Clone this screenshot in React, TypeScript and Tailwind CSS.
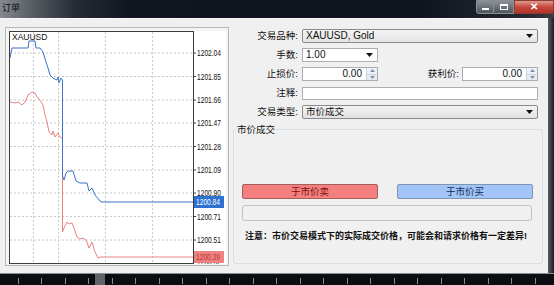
import React from "react";

const F = "font-['Liberation_Sans','Noto_Sans_CJK_SC',sans-serif]";

function Arrow() {
  return (
    <svg width="7" height="4" viewBox="0 0 7 4" className="shrink-0">
      <path d="M0 0h7L3.5 4z" fill="#111" />
    </svg>
  );
}

function Spinner() {
  return (
    <div className="flex flex-col w-[11px] h-full border-l border-[#c9d3de] shrink-0">
      <div className="flex-1 flex items-center justify-center bg-[#eef2f7] border-b border-[#c9d3de]">
        <svg width="5" height="3" viewBox="0 0 5 3"><path d="M0 3h5L2.5 0z" fill="#7f8fa4" /></svg>
      </div>
      <div className="flex-1 flex items-center justify-center bg-[#e6ecf3]">
        <svg width="5" height="3" viewBox="0 0 5 3"><path d="M0 0h5L2.5 3z" fill="#7f8fa4" /></svg>
      </div>
    </div>
  );
}

function AxisText({ x, y, fill, children }: { x: number; y: number; fill: string; children: string }) {
  return (
    <text
      x={x}
      y={y}
      fontSize="8.5"
      fill={fill}
      textLength="24"
      lengthAdjust="spacingAndGlyphs"
      fontFamily="Liberation Sans, sans-serif"
    >
      {children}
    </text>
  );
}

function Chart() {
  const gridY = [53, 76.5, 100, 123, 146.5, 170, 193, 216.5, 240];
  const labels = ["1202.04", "1201.85", "1201.66", "1201.47", "1201.28", "1201.09", "1200.90", "1200.71", "1200.51"];
  const gridX = [33, 58, 105, 152];
  const blue =
    "10,58 12,48 28,48 29,41 35,41 36,48 40,48 43,52 46,62 48,68 50,75 53,78 57,80 58,77 59,83 61,78 62.5,80 62.5,176 64,180 66,173 68,171 73,171 76,181 80,183 87,183 89,191 92,188 95,195 100,201 102,202 193,202";
  const red =
    "10,102 15,103 18,102 22,105 25,102 28,95 32,92 35,93 37,97 40,100 43,105 45,115 47,122 49,132 52,135 53,131 55,137 58,133 60,137 62.5,138 62.5,232 64,228 67,222 69,224 72,223 74,228 77,237 80,239 83,238 86,240 89,248 92,242 95,252 98,258 100,257 193,257";
  return (
    <svg width="217" height="233" viewBox="9 31 217 233" className="block">
      <rect x="9" y="31" width="217" height="233" fill="#ffffff" />
      {gridY.map((y) => (
        <line key={y} x1="10" x2="193" y1={y} y2={y} stroke="#c8c8c8" strokeDasharray="2 2" strokeWidth="1" />
      ))}
      {gridX.map((x) => (
        <line key={x} x1={x + 0.5} x2={x + 0.5} y1="32" y2="263" stroke="#c8c8c8" strokeDasharray="2 2" strokeWidth="1" />
      ))}
      <rect x="9.5" y="31.5" width="184" height="232" fill="none" stroke="#3c3c3c" strokeWidth="1" />
      {gridY.map((y, i) => (
        <g key={"l" + y}>
          <line x1="193" x2="196" y1={y} y2={y} stroke="#3c3c3c" />
          <AxisText x={197} y={y + 3} fill="#111">
            {labels[i]}
          </AxisText>
        </g>
      ))}
      <AxisText x={197} y={265} fill="#111">1200.32</AxisText>
      <polyline points={red} fill="none" stroke="#e98484" strokeWidth="1" />
      <polyline points={blue} fill="none" stroke="#3b73c6" strokeWidth="1" />
      <text x="12" y="40" fontSize="8.5" fill="#111" fontFamily="Liberation Sans, sans-serif">XAUUSD</text>
      <rect x="194" y="196" width="30" height="12" fill="#2d72d2" />
      <AxisText x={196} y={205} fill="#ffffff">1200.84</AxisText>
      <rect x="194" y="251" width="30" height="12" fill="#f08181" />
      <AxisText x={196} y={260} fill="#b53a3a">1200.39</AxisText>
    </svg>
  );
}

function Label({ children, w }: { children: React.ReactNode; w: string }) {
  return <div className={`${w} text-right text-[9.5px] leading-[14px] text-[#111] shrink-0`}>{children}</div>;
}

export default function App() {
  const ticks = [18, 41, 65, 88, 112, 135, 159, 182, 206, 229, 253, 276, 300, 323, 347, 370, 394, 417, 441, 464, 488, 511, 535];
  return (
    <div className={`${F} w-[554px] h-[285px] bg-[#0c1019] flex flex-col overflow-hidden`}>
      {/* title bar */}
      <div className="h-[18px] flex items-start justify-between bg-[linear-gradient(90deg,#85888e_0px,#5b5f66_30px,#262b34_75px,#10151f_130px,#0e131d_420px,#262b33_530px,#3a3e44_554px)]">
        <div className="text-[9px] leading-[16px] pl-[2px] text-[#111]">订单</div>
        <div className="flex h-[14px]">
          <div className="w-[18px] h-[14px] border border-[#8b9096] rounded-bl-[3px] bg-[linear-gradient(180deg,#8b9097,#4f555d)] flex items-end justify-center pb-[3px]">
            <div className="w-[7px] h-[2px] bg-white" />
          </div>
          <div className="w-[20px] h-[14px] border-y border-r border-[#8b9096] bg-[linear-gradient(180deg,#8b9097,#4f555d)] flex items-center justify-center">
            <div className="w-[8px] h-[6px] border border-white border-t-2" />
          </div>
          <div className="w-[40px] h-[14px] border border-[#8e3a33] rounded-br-[3px] bg-[linear-gradient(180deg,#e09a90,#c7473c_50%,#b03329)] flex items-center justify-center">
            <span className="text-white text-[10px] font-bold leading-none">✕</span>
          </div>
        </div>
      </div>

      {/* middle */}
      <div className="flex h-[255px]">
        <div className="w-[548px] h-full bg-[#f0f0f0] border-t border-[#f8f8f8] flex pl-[5px] pt-[8px]">
          {/* chart frame */}
          <div className="w-[224px] h-[239px] border border-[#b7b7b7] bg-[#f4f4f4] pl-[3px] pt-[3px] shrink-0">
            <Chart />
          </div>

          {/* right form */}
          <div className="w-[310px] ml-[4px] flex flex-col">
            <div className="flex flex-col gap-[5px] mt-[2px]">
              <div className="flex items-center h-[14px]">
                <Label w="w-[65px]">交易品种:</Label>
                <div className="ml-[4px] w-[236px] h-[14px] border border-[#8a8a8a] rounded-[2px] bg-[linear-gradient(180deg,#f4f4f4,#e4e4e4)] flex items-center justify-between pl-[3px] pr-[4px]">
                  <span className="text-[10px] leading-none text-[#111]">XAUUSD, Gold</span>
                  <Arrow />
                </div>
              </div>
              <div className="flex items-center h-[14px]">
                <Label w="w-[65px]">手数:</Label>
                <div className="ml-[4px] w-[76px] h-[14px] border border-[#abadb3] bg-white flex items-center justify-between pl-[3px] pr-[4px]">
                  <span className="text-[10px] leading-none text-[#111]">1.00</span>
                  <Arrow />
                </div>
              </div>
              <div className="flex items-center h-[14px]">
                <Label w="w-[65px]">止损价:</Label>
                <div className="ml-[4px] w-[76px] h-[14px] border border-[#abadb3] bg-white flex items-center">
                  <span className="flex-1 text-right pr-[4px] text-[10px] leading-none text-[#111]">0.00</span>
                  <Spinner />
                </div>
                <Label w="w-[81px]">获利价:</Label>
                <div className="ml-[3px] w-[76px] h-[14px] border border-[#abadb3] bg-white flex items-center">
                  <span className="flex-1 text-right pr-[4px] text-[10px] leading-none text-[#111]">0.00</span>
                  <Spinner />
                </div>
              </div>
              <div className="flex items-center h-[14px]">
                <Label w="w-[65px]">注释:</Label>
                <div className="ml-[4px] w-[236px] h-[13px] border border-[#abadb3] bg-white" />
              </div>
              <div className="flex items-center h-[14px]">
                <Label w="w-[65px]">交易类型:</Label>
                <div className="ml-[4px] w-[236px] h-[14px] border border-[#8a8a8a] rounded-[2px] bg-[linear-gradient(180deg,#f2f2f2,#e2e2e2)] flex items-center justify-between pl-[3px] pr-[4px]">
                  <span className="text-[9.5px] leading-none text-[#111]">市价成交</span>
                  <Arrow />
                </div>
              </div>
            </div>

            <fieldset className="mt-[4px] h-[141px] border border-[#d5dfe5] rounded-[3px] px-[8px]">
              <legend className="text-[9.5px] leading-[13px] text-[#111] ml-[-6px] px-[1px]">市价成交</legend>
              <div className="flex gap-[19px] mt-[48px]">
                <button className="w-[136px] h-[15px] border border-[#a55e5e] rounded-[2px] bg-[#f47f7f] text-[9.5px] leading-[13px] text-[#7a1212]">
                  于市价卖
                </button>
                <button className="w-[136px] h-[15px] border border-[#7f93b3] rounded-[2px] bg-[#a2c4f7] text-[9.5px] leading-[13px] text-[#152a5a]">
                  于市价买
                </button>
              </div>
              <div className="mt-[6px] w-[290px] h-[16px] border border-[#c2c2c2] rounded-[3px] bg-[#f0f0f0]" />
              <div className="mt-[9px] pl-[3px] text-[9px] leading-[13px] font-bold text-[#111] whitespace-nowrap">
                注意：市价交易模式下的实际成交价格，可能会和请求价格有一定差异!
              </div>
            </fieldset>
          </div>
        </div>
        <div className="w-[6px] h-full bg-[linear-gradient(90deg,#5a5e63,#1a1d22)]" />
      </div>

      {/* bottom strip */}
      <div className="h-[12px] bg-[#0b0d10] border-t border-[#8a8d92]">
        <svg width="554" height="11" className="block">
          <rect x="95" y="0" width="10" height="11" fill="#9a9ea4" opacity="0.6" />
          {ticks.map((x) => (
            <line key={x} x1={x + 0.5} x2={x + 0.5} y1="4" y2="10" stroke="#8a8d92" strokeWidth="1" />
          ))}
        </svg>
      </div>
    </div>
  );
}
